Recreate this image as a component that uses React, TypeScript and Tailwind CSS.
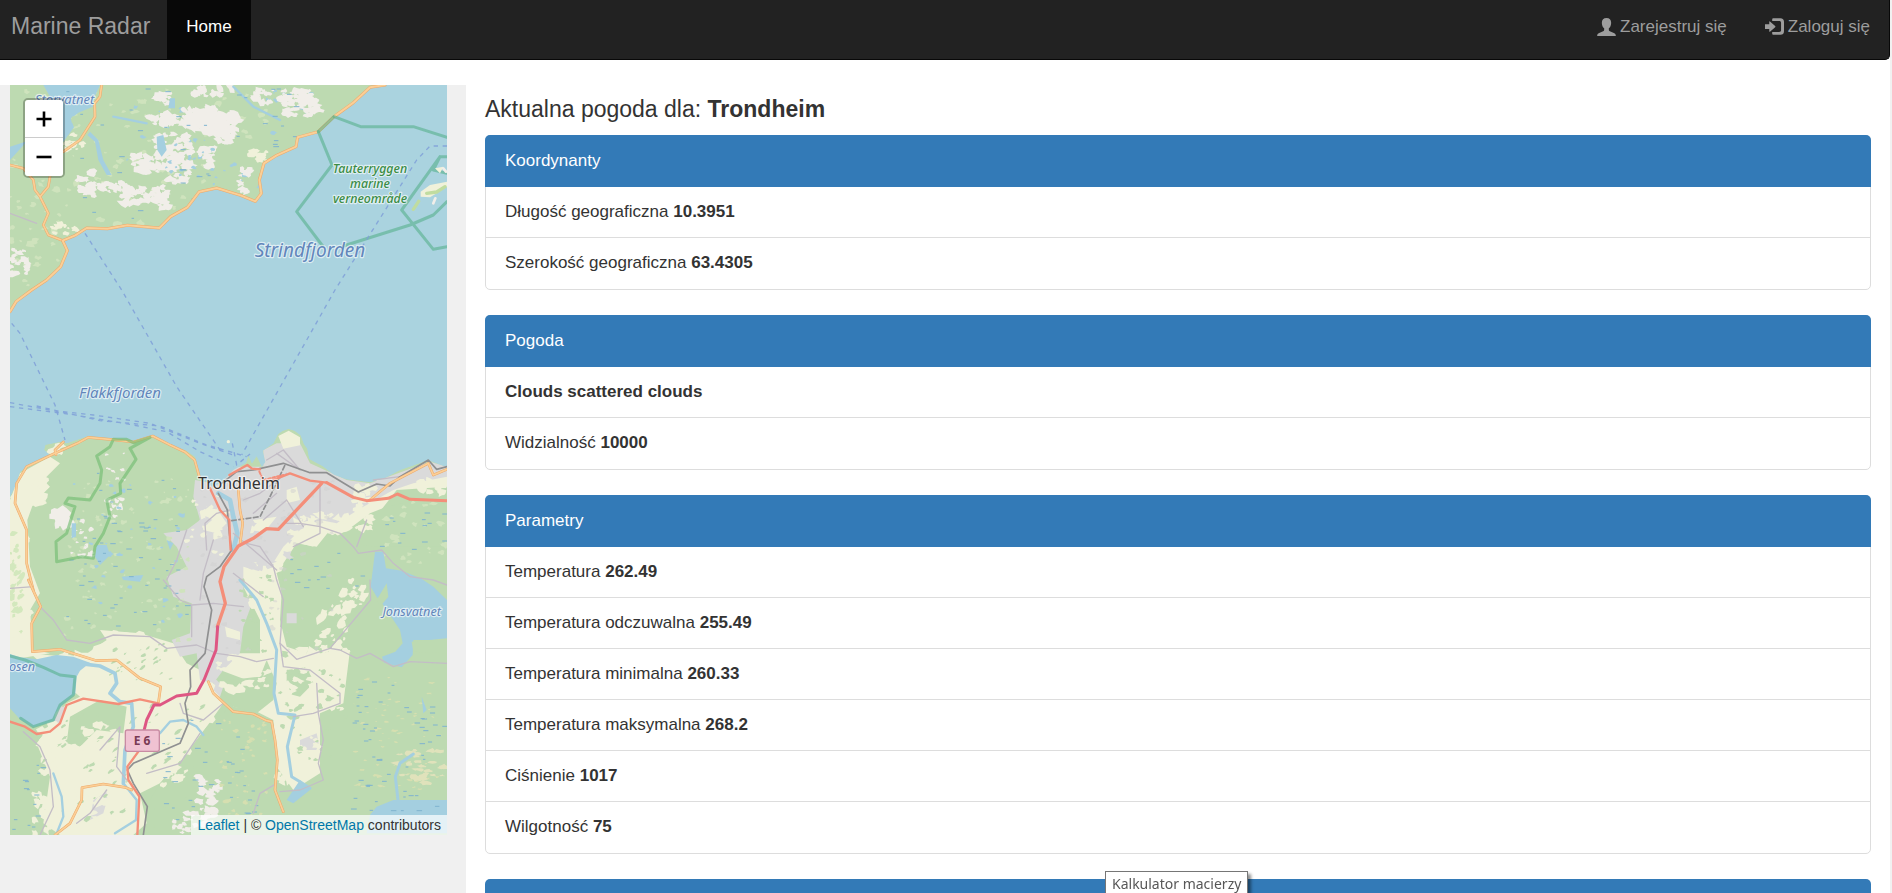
import type { ReactNode } from "react";

type Reading = { label?: string; value: string };
type Panel = { title: string; rows: Reading[] };

const panels: Panel[] = [
  {
    title: "Koordynanty",
    rows: [
      { label: "Długość geograficzna", value: "10.3951" },
      { label: "Szerokość geograficzna", value: "63.4305" },
    ],
  },
  {
    title: "Pogoda",
    rows: [{ value: "Clouds scattered clouds" }, { label: "Widzialność", value: "10000" }],
  },
  {
    title: "Parametry",
    rows: [
      { label: "Temperatura", value: "262.49" },
      { label: "Temperatura odczuwalna", value: "255.49" },
      { label: "Temperatura minimalna", value: "260.33" },
      { label: "Temperatura maksymalna", value: "268.2" },
      { label: "Ciśnienie", value: "1017" },
      { label: "Wilgotność", value: "75" },
    ],
  },
];

/* ---------- map drawing ---------- */

const WATER = "#aad3df";
const FOREST = "#bddab1";
const FARM = "#f0f1da";
const ROCK = "#f1eee9";
const TOWN = "#dadada";
const LAKE = "#a4cfe0";

function random(seed: number) {
  let s = seed;
  return () => {
    s = (s * 16807) % 2147483647;
    return s / 2147483647;
  };
}

type Scatter = {
  x: number;
  y: number;
  w: number;
  h: number;
  n: number;
  size: number;
  fill: string;
  flat?: number;
  tilt?: number;
};

// Irregular patches spread over a rectangle, joined into a single path.
function patches({ x, y, w, h, n, size, flat = 0.7, tilt = 0 }: Scatter, seed: number) {
  const r = random(seed * 7919 + 13);
  r();
  let d = "";
  for (let i = 0; i < n; i++) {
    const cx = x + r() * w;
    const cy = y + r() * h;
    const s = size * (0.35 + r() * 0.9);
    const k = 9;
    for (let j = 0; j < k; j++) {
      const a = (j / k) * Math.PI * 2;
      const q = s * (0.45 + r() * 0.8);
      const px = Math.cos(a) * q;
      const py = Math.sin(a) * q * flat;
      const gx = cx + px * Math.cos(tilt) - py * Math.sin(tilt);
      const gy = cy + px * Math.sin(tilt) + py * Math.cos(tilt);
      d += (j ? "L" : "M") + gx.toFixed(0) + " " + gy.toFixed(0);
    }
    d += "Z";
  }
  return d;
}

const scatters: Scatter[] = [
  // pale woods
  { x: 30, y: 255, w: 800, h: 440, n: 110, size: 13, fill: "#cfe3bd" },
  { x: 30, y: 560, w: 150, h: 300, n: 30, size: 12, fill: "#cfe3bd" },
  // small tarns, north shore
  { x: 360, y: 320, w: 480, h: 260, n: 22, size: 9, fill: LAKE },
  { x: 740, y: 270, w: 200, h: 70, n: 14, size: 8, fill: LAKE },
  // bare rock, north shore
  { x: 455, y: 280, w: 55, h: 35, n: 12, size: 16, fill: ROCK },
  { x: 450, y: 340, w: 130, h: 35, n: 26, size: 18, fill: ROCK, tilt: 0.4 },
  { x: 545, y: 325, w: 100, h: 60, n: 36, size: 22, fill: ROCK, tilt: 0.5 },
  { x: 610, y: 340, w: 100, h: 60, n: 34, size: 22, fill: ROCK, tilt: 0.5 },
  { x: 650, y: 380, w: 50, h: 50, n: 16, size: 17, fill: ROCK, tilt: 0.5 },
  { x: 575, y: 260, w: 120, h: 30, n: 18, size: 15, fill: ROCK, tilt: 0.4 },
  { x: 760, y: 262, w: 170, h: 50, n: 50, size: 14, fill: ROCK },
  { x: 850, y: 290, w: 110, h: 58, n: 40, size: 14, fill: ROCK },
  { x: 460, y: 400, w: 110, h: 90, n: 50, size: 15, fill: ROCK },
  { x: 395, y: 465, w: 130, h: 50, n: 38, size: 17, fill: ROCK, tilt: 0.3 },
  { x: 600, y: 445, w: 50, h: 55, n: 20, size: 16, fill: ROCK },
  { x: 505, y: 490, w: 70, h: 55, n: 26, size: 15, fill: ROCK },
  { x: 235, y: 515, w: 50, h: 70, n: 26, size: 15, fill: ROCK },
  { x: 290, y: 550, w: 120, h: 30, n: 20, size: 14, fill: ROCK, tilt: 0.4 },
  { x: 370, y: 560, w: 130, h: 50, n: 34, size: 16, fill: ROCK },
  { x: 470, y: 575, w: 35, h: 50, n: 16, size: 15, fill: ROCK },
  { x: 715, y: 490, w: 35, h: 90, n: 20, size: 12, fill: ROCK },
  { x: 740, y: 450, w: 60, h: 35, n: 14, size: 13, fill: FARM },
  { x: 150, y: 670, w: 90, h: 30, n: 16, size: 11, fill: FARM, tilt: 0.4 },
  { x: 30, y: 740, w: 60, h: 90, n: 24, size: 13, fill: ROCK },
  { x: 195, y: 400, w: 60, h: 50, n: 14, size: 11, fill: FARM },
  { x: 470, y: 400, w: 180, h: 160, n: 18, size: 8, fill: LAKE },
  // Bymarka
  { x: 190, y: 1420, w: 380, h: 500, n: 90, size: 9, fill: "#cfe3bd" },
  { x: 165, y: 1530, w: 45, h: 50, n: 18, size: 20, fill: ROCK, flat: 1 },
  { x: 215, y: 1560, w: 60, h: 110, n: 18, size: 11, fill: ROCK },
  { x: 320, y: 1490, w: 50, h: 60, n: 10, size: 11, fill: ROCK },
  { x: 320, y: 1360, w: 60, h: 80, n: 10, size: 9, fill: ROCK },
  { x: 200, y: 1400, w: 360, h: 480, n: 32, size: 9, fill: LAKE },
  // west coast fields
  { x: 45, y: 1440, w: 90, h: 70, n: 26, size: 20, fill: FARM },
  { x: 30, y: 1600, w: 55, h: 340, n: 44, size: 20, fill: FARM },
  { x: 30, y: 1600, w: 45, h: 300, n: 26, size: 12, fill: "#d3e8bd", tilt: -0.8 },
  { x: 150, y: 1330, w: 40, h: 30, n: 6, size: 16, fill: FARM },
  // fields east of the town
  { x: 1060, y: 1450, w: 70, h: 110, n: 24, size: 18, fill: FARM },
  { x: 880, y: 1540, w: 240, h: 60, n: 30, size: 18, fill: FARM },
  { x: 1150, y: 1490, w: 190, h: 200, n: 26, size: 12, fill: "#cfe3bd" },
  { x: 1260, y: 1440, w: 80, h: 40, n: 12, size: 15, fill: FARM },
  { x: 740, y: 1690, w: 90, h: 130, n: 30, size: 20, fill: FARM },
  { x: 950, y: 1800, w: 90, h: 180, n: 34, size: 17, fill: FARM, tilt: -0.7 },
  { x: 1020, y: 1740, w: 80, h: 80, n: 20, size: 15, fill: FARM, tilt: -0.7 },
  { x: 860, y: 1940, w: 170, h: 190, n: 60, size: 18, fill: FARM },
  { x: 650, y: 1970, w: 150, h: 100, n: 26, size: 18, fill: FARM },
  { x: 880, y: 2140, w: 80, h: 160, n: 30, size: 15, fill: FARM },
  { x: 830, y: 2180, w: 40, h: 170, n: 18, size: 16, fill: FARM, tilt: 1.5 },
  // southern valley fields
  { x: 110, y: 1960, w: 340, h: 110, n: 60, size: 34, fill: FARM },
  { x: 310, y: 1900, w: 180, h: 120, n: 44, size: 20, fill: FARM },
  { x: 470, y: 2050, w: 170, h: 120, n: 44, size: 22, fill: FARM },
  { x: 120, y: 2170, w: 250, h: 160, n: 50, size: 20, fill: FARM },
  { x: 180, y: 2320, w: 230, h: 160, n: 50, size: 24, fill: FARM },
  { x: 100, y: 2380, w: 60, h: 120, n: 20, size: 17, fill: FARM, tilt: 1 },
  { x: 420, y: 2230, w: 140, h: 130, n: 30, size: 17, fill: FARM, tilt: -0.7 },
  { x: 595, y: 2330, w: 60, h: 150, n: 36, size: 15, fill: ROCK },
  { x: 520, y: 2440, w: 70, h: 60, n: 14, size: 13, fill: ROCK },
  // bogs
  { x: 660, y: 2160, w: 140, h: 290, n: 44, size: 8, fill: "#d6dfb0" },
  { x: 1060, y: 2030, w: 270, h: 350, n: 70, size: 8, fill: "#d6dfb0", flat: 0.4 },
  { x: 1190, y: 2250, w: 150, h: 100, n: 36, size: 15, fill: "#e0e2bb", flat: 0.4 },
  // woods scattered back over the fields
  { x: 110, y: 2110, w: 500, h: 380, n: 60, size: 12, fill: FOREST, tilt: -0.6, flat: 0.45 },
  { x: 320, y: 1930, w: 200, h: 110, n: 26, size: 9, fill: FOREST, tilt: -0.6, flat: 0.45 },
  { x: 840, y: 1950, w: 200, h: 330, n: 36, size: 11, fill: FOREST },
  { x: 720, y: 1720, w: 120, h: 260, n: 20, size: 9, fill: FOREST },
];

const marks: Scatter[] = [
  { x: 200, y: 260, w: 720, h: 420, n: 50, size: 0, fill: "#7fb4cf" },
  { x: 200, y: 1420, w: 360, h: 480, n: 60, size: 0, fill: "#7fb4cf" },
  { x: 860, y: 1660, w: 240, h: 120, n: 14, size: 0, fill: "#7fb4cf" },
  { x: 1050, y: 2040, w: 280, h: 400, n: 56, size: 0, fill: "#7fb4cf" },
  { x: 480, y: 2160, w: 320, h: 300, n: 36, size: 0, fill: "#7fb4cf" },
  { x: 35, y: 2290, w: 90, h: 200, n: 14, size: 0, fill: "#7fb4cf" },
  { x: 1140, y: 1520, w: 190, h: 130, n: 14, size: 0, fill: "#7fb4cf" },
];

function dashes({ x, y, w, h, n }: Scatter, seed: number) {
  const r = random(seed * 104729 + 7);
  r();
  let d = "";
  for (let i = 0; i < n; i++) {
    d += `M${(x + r() * w).toFixed(0)} ${(y + r() * h).toFixed(0)}h${(5 + r() * 10).toFixed(0)}`;
  }
  return d;
}

function Road({ d, color, casing, width = 7 }: { d: string; color: string; casing?: string; width?: number }) {
  return (
    <>
      {casing && <path d={d} stroke={casing} strokeWidth={width + 3} />}
      <path d={d} stroke={color} strokeWidth={width} />
    </>
  );
}

const NORTH =
  "M30 255H1165L1110 262 1060 308 1002 350 955 395 890 412 888 440 830 466 792 490 778 540 784 580 766 604 722 586 650 564 598 575 562 622 512 650 478 684 382 676 322 686 260 684 226 706 192 722 204 752 182 800 140 842 95 872 50 905 30 935Z";
const SOUTH =
  "M30 1490L45 1460 60 1415 100 1390 150 1365 132 1350 136 1334 180 1325 200 1330 235 1318 265 1308 330 1314 400 1322 458 1306 512 1334 560 1352 586 1370 598 1430 640 1462 672 1440 700 1410 738 1388 745 1366 756 1390 770 1368 786 1400 796 1386 788 1352 820 1330 834 1302 848 1292 866 1286 884 1292 902 1306 912 1332 922 1346 928 1376 945 1386 968 1398 1002 1424 1040 1438 1110 1446 1150 1436 1200 1410 1285 1380 1341 1402V2505H30Z";

const ferry = "#7f9fd8";

function MapDrawing() {
  return (
    <svg
      viewBox="30 255 1311 2250"
      preserveAspectRatio="xMidYMid slice"
      className="block h-full w-full"
      role="img"
      aria-label="Trondheim"
      fill="none"
      strokeLinejoin="round"
      strokeLinecap="round"
    >
      <defs>
        <clipPath id="land">
          <path d={NORTH + SOUTH} />
        </clipPath>
      </defs>
      <path d="M0 0H1400V2600H0Z" fill={WATER} />

      <g clipPath="url(#land)">
        <path d={NORTH + SOUTH} fill={FOREST} />

        {/* farmland */}
        <g fill={FARM}>
          <path d="M30 1500L60 1420 150 1370 180 1390 130 1440 150 1460 100 1510 82 1560 90 1700 120 1780 90 1830 100 1950 150 1960 30 1980Z" />
          <path d="M90 1960L240 1975 320 1920 300 1890 420 1900 520 1930 560 1990 620 2020 670 2110 620 2180 560 2260 480 2350 420 2380 440 2470 400 2505H180L130 2470 150 2330 110 2230 200 2110 240 2090Z" />
          <path d="M720 1740L830 1720 850 1800 840 1880 960 1960 1050 1950 1030 2110 960 2140 960 2320 880 2370 830 2300 820 2160 760 2130 700 2120 740 2040 660 2010 690 1960 780 1960 780 1860Z" />
          <path d="M900 1540L1110 1480 1130 1440 1341 1420 1341 1460 1190 1470 1120 1560 1040 1590 960 1640 880 1660 830 1720 760 1770 700 1720Z" />
        </g>
        {/* forest blocks on the farmland */}
        <g fill={FOREST}>
          <path d="M690 2040L780 2030 800 1980 830 2050 820 2100 770 2140 700 2120 670 2080Z" />
          <path d="M860 2010L930 2000 940 2050 900 2090 860 2080Z" />
          <path d="M210 2150L300 2100 380 2120 370 2200 290 2190 240 2240 200 2230Z" />
          <path d="M1030 1600L1110 1540 1160 1520 1341 1480V1640L1120 1640 1060 1630Z" />
          <path d="M850 1690L890 1630 950 1640 990 1590 1060 1640 1110 1670 1120 1760 1000 1800 960 1840 920 1960 860 1940 840 1860Z" />
          <path d="M450 2400L480 2350 560 2260 620 2180 680 2130 780 2150 815 2200 830 2330 820 2505H440Z" />
        </g>

        {/* built-up area */}
        <g fill={TOWN}>
          <path d="M585 1440L640 1450 700 1400 790 1400 790 1350 830 1330 900 1330 930 1390 1040 1440 1110 1450 1290 1385 1341 1400 1341 1430 1240 1450 1180 1470 1090 1520 1010 1570 960 1560 900 1590 850 1640 800 1720 730 1700 730 1790 760 1800 730 1880 720 1960 670 2010 640 2050 600 2040 590 1960 540 1970 515 1920 570 1900 575 1810 520 1790 500 1730 560 1700 530 1640 490 1600 560 1590 600 1560 580 1490Z" />
          <path d="M640 2030L670 2060 660 2090 640 2070ZM900 2220L950 2200 960 2250 900 2250ZM860 1840L890 1840 890 1870 860 1870ZM160 2120L200 2120 180 2170 150 2180ZM280 2400L330 2370 310 2440 270 2460Z" />
        </g>
        <g fill={FARM}>
          <path d="M600 1540L640 1510 680 1570 650 1600 610 1590ZM860 1470L890 1460 900 1500 860 1510ZM675 1880L720 1895 720 1920 680 1910ZM760 1560L830 1550 790 1600 750 1600ZM835 1308L866 1292 900 1312 900 1336 850 1346ZM640 1600L660 1590 670 1610 640 1620ZM900 1590L950 1580 940 1640 900 1630Z" />
        </g>
        {scatters.map((s, i) => (
          <path key={i} d={patches(s, i + 1)} fill={s.fill} />
        ))}
        <path
          d={patches({ x: 560, y: 1470, w: 130, h: 200, n: 18, size: 12, fill: FARM }, 91)}
          fill={FARM}
        />
        <path
          d={patches({ x: 590, y: 1500, w: 280, h: 200, n: 40, size: 15, fill: TOWN }, 77)}
          fill={TOWN}
        />
        <path
          d={patches({ x: 600, y: 1440, w: 400, h: 520, n: 60, size: 10, fill: TOWN }, 57)}
          fill="#d0cfcf"
          fillOpacity="0.5"
        />

        {/* lakes and rivers */}
        <g fill={LAKE}>
          <path d="M130 255L300 255 284 290 278 320 235 338 212 356 222 382 190 425 80 425 30 480V440L76 425V330L150 290Z" />
          <path d="M470 410L490 405 500 450 485 470 472 450ZM510 295L525 295 525 325 505 325ZM270 395L295 420 310 480 335 525 320 525 295 480 285 425 262 405Z" />
          <path d="M290 1635L320 1635 330 1665 300 1695 285 1670ZM215 1570L228 1570 228 1610 215 1615ZM365 1730L430 1725 420 1745 370 1740ZM500 1620L520 1630 510 1650Z" />
          <path d="M1125 1655L1150 1655 1158 1705 1205 1712 1262 1735 1300 1760 1341 1800V1920H1240L1238 1965 1205 2002 1152 1988 1146 1970 1186 1955 1208 1930 1200 1890 1150 1815 1130 1790 1112 1760Z" />
          <path d="M1110 2445L1130 2420 1180 2400H1341V2500H1100ZM1265 2090L1280 2130 1270 2140ZM900 2340L930 2370 880 2410 860 2400Z" />
          <path d="M30 1962L60 1972 110 1978 170 1965 220 1970 270 1988 240 2012 230 2030 226 2082 190 2112 166 2140 164 2162 100 2182 62 2160 30 2125Z" />
        </g>
        <path d="M1130 1800L1160 1750 1165 1790 1140 1820ZM1235 1925L1341 1915V1960L1240 1955Z" fill={FOREST} />
        <path d="M215 350L280 335 295 350 255 372 215 368Z" fill={FOREST} />
        <g stroke={LAKE}>
          <path d="M235 1990L300 1998 345 2020 350 2050 330 2080 360 2105 395 2110 400 2180 375 2250 370 2350" strokeWidth="11" />
          <path d="M480 2200L510 2165 550 2160 590 2180 610 2205M370 2350L410 2400 408 2460 345 2500" strokeWidth="7" />
          <path d="M720 1740L770 1800 800 1870 830 1950 822 2080 835 2140 885 2145 862 2240 875 2330 900 2345 930 2365" strokeWidth="9" />
          <path d="M655 1480L690 1500 700 1550 712 1600 700 1650" strokeWidth="14" />
          <path d="M1240 2262L1200 2290 1186 2330 1194 2400" strokeWidth="9" />
          <path d="M160 2320L185 2390 190 2450 170 2500M340 350L440 370M700 260L760 320 840 360" strokeWidth="7" />
        </g>
        {marks.map((m, i) => (
          <path key={i} d={dashes(m, i + 1)} stroke={m.fill} strokeWidth="3" />
        ))}
      </g>

      {/* minor roads */}
      <g stroke="#c3bdc6" strokeWidth="4">
        <path d="M120 1820L160 1860 200 1920 270 1930 340 1905 450 1910 500 1945 590 1935 650 1960 720 1970 770 1985 820 1975M490 1740L540 1800 575 1815 640 1810 730 1820M575 1815V1910M620 1650L615 1570 650 1540 690 1530M560 1590L530 1680 500 1740" />
        <path d="M830 1740L820 1700 780 1640 740 1630M860 1570L900 1570 960 1580 1020 1600 1060 1640 1075 1660 1145 1650 1180 1690 1230 1730 1300 1740 1341 1755M1110 1740L1112 1800 990 1945 890 1978 840 1930" />
        <path d="M830 1740L850 1800 840 1930 850 2000 930 2010 1020 2080 1020 2110 940 2140 880 2150M950 2050L955 2140 970 2220 955 2290 970 2340 900 2370 840 2375M990 1945L1020 1950 1070 1975 1110 1960 1180 2000 1230 1985 1341 1990" />
        <path d="M70 2195L120 2240 150 2310 160 2420 120 2505M540 2110L550 2140 610 2160 670 2110M300 2250L360 2180 350 2300 380 2340M440 2320L540 2290 600 2200M320 2370L270 2440 230 2470M830 2350L780 2380 760 2440" />
        <path d="M640 1620L610 1720 600 1800M700 1600L760 1650 830 1710M730 1500L780 1480 860 1420M760 1540L830 1480M790 1560L860 1500 910 1580M880 1640L960 1600 960 1450M1100 1560L1070 1640M1120 1440L1200 1430M830 1360L900 1410 850 1350 800 1380M700 1720L790 1790M30 1765L100 1760M30 640L110 670" />
      </g>

      {/* railway */}
      <g stroke="#8f9091" strokeWidth="5">
        <path d="M655 1480L682 1530 688 1600 695 1650 660 1700 620 1730 612 1760 635 1830 615 1960 570 2010 572 2060 555 2110 565 2170 540 2230 400 2290 382 2310 400 2350 442 2420 430 2505M665 1450L710 1415 760 1410 850 1390 930 1418 980 1418 1075 1476 1130 1452 1170 1458 1200 1430 1285 1380 1310 1408 1341 1400" />
        <path d="M695 1562L780 1550 810 1490 855 1395" strokeDasharray="14 8" />
      </g>

      {/* secondary roads */}
      <g>
        <Road casing="#eda96b" color="#fbcf96" width={5} d="M305 255L300 290 284 310 285 350 240 420 190 455M30 495L70 505 100 540 105 570 120 590 145 640 130 675 145 705 190 722M150 530L145 560 120 590" />
        <Road casing="#eda96b" color="#fbcf96" width={6} d="M1155 255L1110 262 1060 308 1002 350 955 395 893 412 888 440 830 466 792 490 778 540 784 580 766 604 722 586 650 564 598 575 562 622 512 650 478 684 382 676 322 686 260 684 226 706 188 722 202 752 182 800 140 840 95 870 48 905 30 935" />
        <Road casing="#eda96b" color="#fbcf96" width={5} d="M190 1326L165 1350 168 1364M100 1770L80 1690 80 1590 45 1510 50 1450 80 1400 160 1362 235 1328 265 1312 330 1318 400 1326 458 1308 512 1336 555 1356 584 1380 598 1430" />
        <Road casing="#eda96b" color="#fbcf96" width={5} d="M85 1740L122 1820 95 1870 97 1955 180 1948 290 1982 350 1980 420 2035 482 2060 475 2110M625 2045L640 2080 700 2135 760 2142 800 2162 815 2165 825 2220 832 2280 825 2370 850 2435M165 2505L210 2470 245 2400 246 2363 310 2352 375 2362 395 2370" />
        <Road casing="#eda96b" color="#fbcf96" width={5} d="M715 1470L720 1530 728 1570 720 1635M1110 1500L1170 1450 1285 1390 1300 1425 1341 1408" />
      </g>

      {/* trunk roads */}
      <g>
        <Road color="#f48e79" width={7} d="M688 1425L742 1395 756 1406 780 1408M630 1465L660 1530 688 1560 690 1620 692 1650M820 1440L870 1420 930 1442 980 1448" />
        <Road color="#f48e79" width={9} d="M980 1448L1060 1492 1100 1502 1165 1495 1192 1482 1230 1498 1341 1502" />
        <Road color="#f48e79" width={10} d="M965 1450L835 1588 800 1586 760 1615 715 1638 672 1700 660 1745 676 1810 652 1880" />
        <Road color="#f48e79" width={7} d="M30 2165L75 2180 110 2202 150 2195 180 2170 200 2115 250 2096 355 2112 420 2098 475 2110M415 2255L382 2300 385 2340 418 2390 412 2505" />
        <Road color="#de5683" width={9} d="M653 1880L648 1950 612 2040 590 2080 530 2088 480 2115 462 2115 440 2160 430 2200" />
        <path d="M778 1415L790 1440 850 1425" stroke="#f48e79" strokeWidth="6" strokeDasharray="8 6" />
      </g>

      {/* protected areas */}
      <g stroke="#57b08c" strokeOpacity="0.6" strokeWidth="9">
        <path d="M1002 350L1082 380 1240 380 1341 412M955 395L996 495 890 635 968 738M1030 738L1230 675 1300 645 1341 605M1341 470L1320 470 1205 630 1300 748 1341 740M1320 470L1300 510 1341 520" />
        <path d="M1000 352L955 395" />
        <path d="M30 1968L75 1980 130 2002 180 2025 225 2030 220 2085 180 2115 160 2160 100 2180 62 2155" />
      </g>
      <g stroke="#6dba6c" strokeOpacity="0.6" strokeWidth="9">
        <path d="M340 1318L380 1318 400 1328 450 1312 390 1345 408 1378 360 1450 362 1480 320 1500 330 1550 310 1600 285 1640 280 1675 245 1670 170 1685 168 1625 200 1600 225 1520 195 1510 205 1494 270 1500 300 1450 305 1410 290 1368 330 1340Z" />
      </g>
      <path d="M1262 575L1290 555 1341 545V560L1310 580 1290 592 1262 590ZM1305 505L1330 500 1320 520Z" fill={FARM} />
      <path d="M1280 580L1310 576 1335 560M1240 628L1256 604" stroke="#c0dca0" strokeWidth="10" />
      <path d="M1300 610L1306 595M1330 505L1338 515" stroke={ROCK} strokeWidth="8" />

      {/* ferry lines */}
      <g stroke={ferry} strokeOpacity="0.85" strokeWidth="4" strokeDasharray="13 14" strokeLinecap="butt">
        <path d="M255 700L365 870 530 1160 660 1350M1341 438H1290L1250 480 1005 870 725 1365M35 970L60 1000 165 1215 195 1320" />
        <path d="M30 1208L160 1232 280 1245 450 1270 600 1330 700 1365M30 1220L220 1244 400 1275 500 1295 600 1355 700 1400M110 1218L300 1262 480 1278 620 1335 740 1370M697 1330L710 1395 750 1362" />
      </g>
      <circle cx="685" cy="1325" r="5" fill={FARM} />

      {/* labels */}
      <g fontFamily="'Noto Sans', sans-serif" stroke="#ffffff" strokeOpacity="0.6" strokeWidth="7" paintOrder="stroke">
        <g fill="#6286bb" fontStyle="italic" textAnchor="middle">
          <text x="930" y="770" fontSize="57">Strindfjorden</text>
          <text x="360" y="1193" fontSize="45">Flakkfjorden</text>
          <text x="194" y="312" fontSize="39">Storvatnet</text>
          <text x="1235" y="1849" fontSize="38">Jonsvatnet</text>
          <text x="66" y="2012" fontSize="38">osen</text>
        </g>
        <g fill="#3a8c45" fontStyle="italic" fontWeight="500" textAnchor="middle" fontSize="37">
          <text x="1110" y="518">Tauterryggen</text>
          <text x="1110" y="563">marine</text>
          <text x="1110" y="608">verneområde</text>
        </g>
        <text x="717" y="1468" fontSize="48" fill="#333333" textAnchor="middle">Trondheim</text>
      </g>
      <rect x="376" y="2190" width="102" height="64" rx="6" fill="#f0c2d2" stroke="#c88ba3" strokeWidth="4" />
      <text x="426" y="2236" fontSize="36" fontWeight="700" fontFamily="'Noto Sans', sans-serif" fill="#7a3a55" textAnchor="middle">
        E 6
      </text>
    </svg>
  );
}

/* ---------- page ---------- */

function UserIcon() {
  return (
    <svg viewBox="0 0 56 54" className="h-[18px] w-[19px]" fill="currentColor" aria-hidden="true">
      <path d="M28 0C37 0 42 6 42 14C42 22 39 28 35 31V36C35 38 36 39 38 40L50 45C54 47 56 49 56 54H0C0 49 2 47 6 45L18 40C20 39 21 38 21 36V31C17 28 14 22 14 14C14 6 19 0 28 0Z" />
    </svg>
  );
}

function LoginIcon() {
  return (
    <svg viewBox="0 0 58 51" className="h-[17px] w-[19px]" fill="currentColor" aria-hidden="true">
      <path d="M0 19H13V11Q13 8 16 11L31 24Q33 26 31 28L16 41Q13 43 13 40V33H0Z" />
      <path d="M22 3Q22 0 25 0H47C54 0 58 4 58 11V40C58 47 54 51 47 51H25Q22 51 22 48V42H43C47 42 49 40 49 37V14C49 11 47 9 43 9H22Z" />
    </svg>
  );
}

function NavLink({ icon, children }: { icon: ReactNode; children: ReactNode }) {
  return (
    <a href="#" className="flex items-center gap-1 px-[19px] text-[#9d9d9d]">
      {icon}
      <span>{children}</span>
    </a>
  );
}

function ZoomButton({ label, d, className }: { label: string; d: string; className: string }) {
  return (
    <button type="button" aria-label={label} className={`flex size-[38px] items-center justify-center bg-white ${className}`}>
      <svg viewBox="0 0 16 16" className="size-4" stroke="#000" strokeWidth="2.6" aria-hidden="true">
        <path d={d} />
      </svg>
    </button>
  );
}

function PanelCard({ title, rows }: Panel) {
  return (
    <section className="mb-[25px] rounded-[5px] border border-[#ddd] bg-white">
      <h2 className="-mx-px -mt-px rounded-t-[5px] bg-[#337ab7] px-5 pt-[13px] pb-[14px] text-white">{title}</h2>
      <ul>
        {rows.map((row) => (
          <li key={row.value} className="border-b border-[#ddd] px-[19px] pt-3 pb-[13px] last:border-b-0 last:pb-[14px]">
            {row.label && <span>{row.label} </span>}
            <b>{row.value}</b>
          </li>
        ))}
      </ul>
    </section>
  );
}

export default function App() {
  return (
    <div className="flex h-screen flex-col overflow-hidden border-r-2 border-[#f1f1f1] bg-white font-['Liberation_Sans',Arial,sans-serif] text-[17px] leading-[25px] text-[#333]">
      <nav className="mb-[25px] flex h-[60px] shrink-0 items-stretch justify-between rounded-br-[5px] border-r border-b border-[#080808] bg-[#222]">
        <div className="flex">
          <a href="#" className="pt-[14px] pr-[17px] pl-[11px] text-[23px] text-[#9d9d9d]">
            Marine Radar
          </a>
          <a href="#" className="bg-[#080808] px-[19px] pt-[14px] text-white">
            Home
          </a>
        </div>
        <div className="flex pb-[6px]">
          <NavLink icon={<UserIcon />}>Zarejestruj się</NavLink>
          <NavLink icon={<LoginIcon />}>Zaloguj się</NavLink>
        </div>
      </nav>

      <div className="flex min-h-0 flex-1">
        <aside className="w-[466px] shrink-0 bg-[#f0f0f0] pr-[19px] pl-[10px]">
          <div className="relative h-[750px] overflow-hidden bg-[#ddd]">
            <MapDrawing />
            <div className="absolute top-[13px] left-[13px] rounded-[5px] border-2 border-black/25">
              <ZoomButton label="Zoom in" d="M8 0.5V15.5M0.5 8H15.5" className="rounded-t-[3px] border-b border-[#ccc]" />
              <ZoomButton label="Zoom out" d="M0.5 8H15.5" className="rounded-b-[3px]" />
            </div>
            <p className="absolute right-0 bottom-0 bg-white/70 px-[6px] text-[14px] leading-5 whitespace-nowrap">
              <a href="#" className="text-[#0078a8]">
                Leaflet
              </a>{" "}
              | ©{" "}
              <a href="#" className="text-[#0078a8]">
                OpenStreetMap
              </a>{" "}
              contributors
            </p>
          </div>
        </aside>

        <main className="min-w-0 flex-1 px-[19px] pt-3">
          <h1 className="mb-[13px] text-[23px]">
            Aktualna pogoda dla: <b>Trondheim</b>
          </h1>
          {panels.map((panel) => (
            <PanelCard key={panel.title} {...panel} />
          ))}
          <section className="h-[52px] rounded-t-[5px] bg-[#337ab7]" />
        </main>
      </div>

      <div
        role="tooltip"
        className="fixed top-[871px] left-[1105px] border border-[#767676] bg-white px-[6px] font-['Noto_Sans',sans-serif] text-[14px] leading-6 text-[#575757] shadow-[3px_3px_3px_rgba(0,0,0,0.45)]"
      >
        Kalkulator macierzy
      </div>
    </div>
  );
}
